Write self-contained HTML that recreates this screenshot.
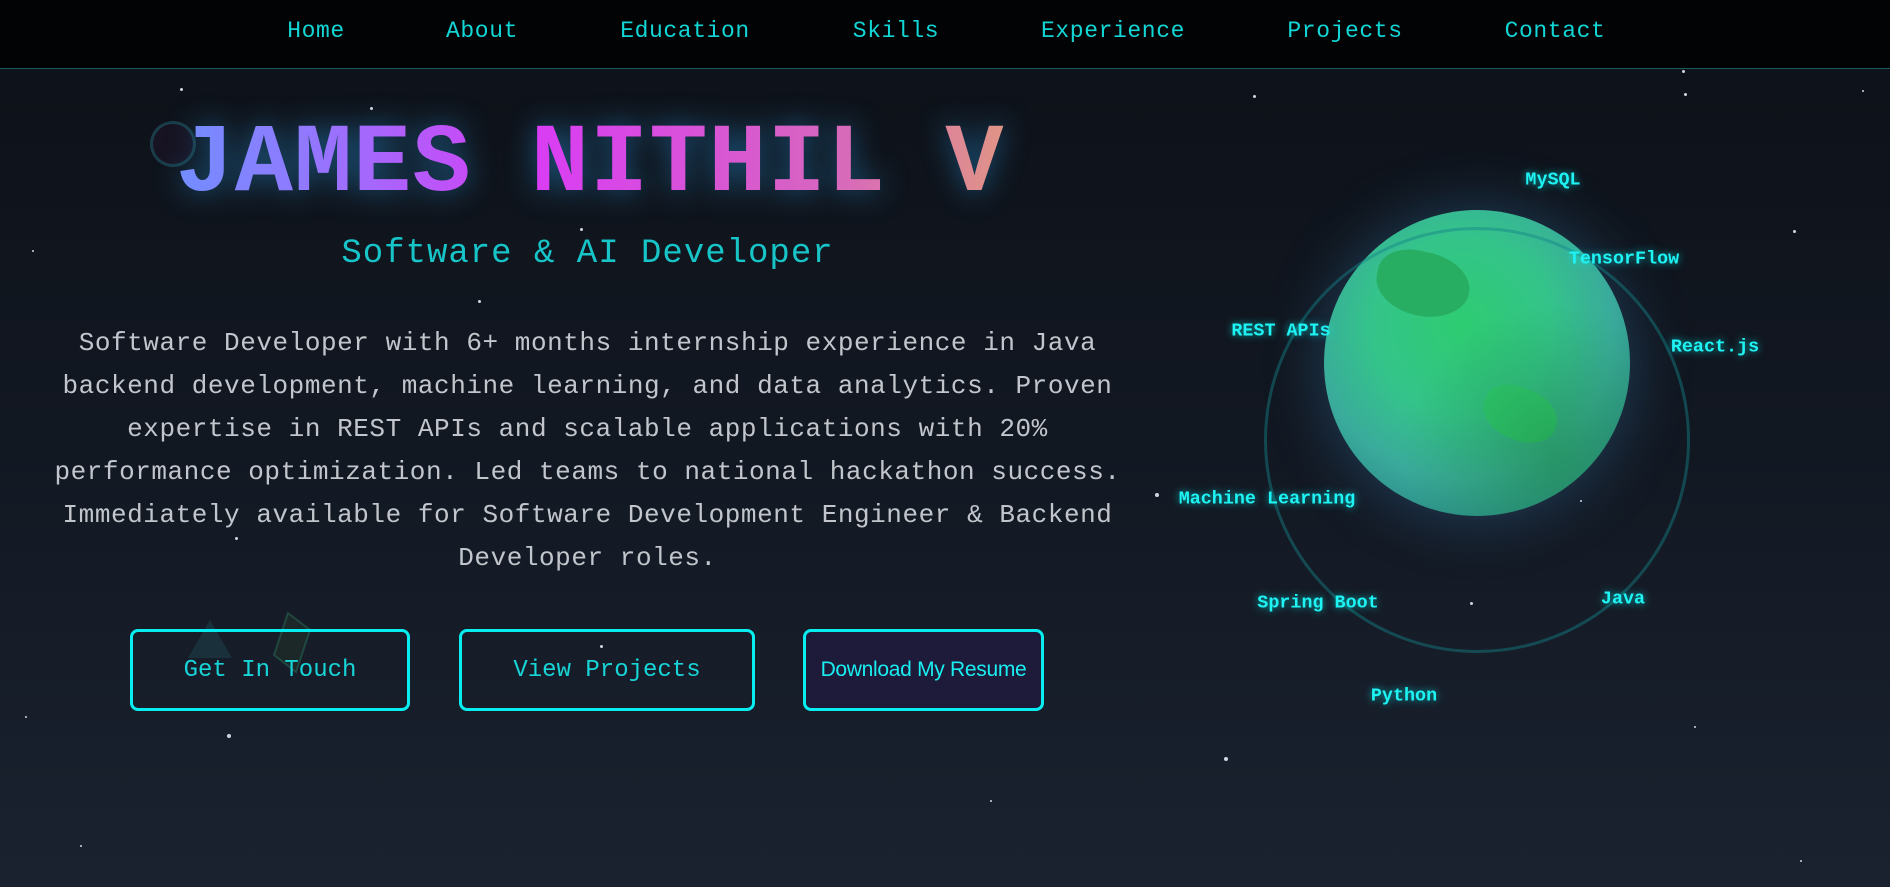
<!DOCTYPE html>
<html><head><meta charset="utf-8"><style>
*{margin:0;padding:0;box-sizing:border-box}
body{width:1890px;height:887px;overflow:hidden;background:linear-gradient(180deg,#0d1118 0%,#121822 50%,#1a2230 100%);font-family:"Liberation Mono",monospace;position:relative}
nav{position:absolute;left:0;top:0;width:1890px;height:69px;background:#020304;border-bottom:1px solid #1d5a5a}
nav span{position:absolute;top:18px;color:#12d6d6;font-size:23px;transform:translateX(-50%);letter-spacing:0.6px}
.star{position:absolute;background:#cfd6e0;border-radius:50%}
h1{position:absolute;left:0;width:1180px;top:110px;text-align:center;font-size:97px;font-weight:bold;letter-spacing:1px;white-space:nowrap;
background:linear-gradient(90deg,#4aa8ff 0%,#8e7bff 25%,#d93cf5 45%,#d765c0 70%,#e6b460 95%);-webkit-background-clip:text;background-clip:text;color:transparent;filter:drop-shadow(0 0 14px rgba(40,150,220,.55))}
.sub{position:absolute;left:0;width:1175px;top:235px;text-align:center;color:#17c4c8;font-size:34px;letter-spacing:1px}
.p{position:absolute;left:0;width:1175px;top:322px;text-align:center;color:#c2c6cc;font-size:26px;line-height:43px;letter-spacing:.55px;white-space:nowrap}
.btn{position:absolute;top:629px;height:82px;border:3px solid #08eef0;border-radius:8px;color:#17d4d6;font-size:24px;display:flex;align-items:center;justify-content:center}
.planet{position:absolute;left:1324px;top:210px;width:306px;height:306px;border-radius:50%;
background:radial-gradient(circle at 45% 38%,#2ecc71 0%,#34c48a 35%,#3aaa9c 60%,#2b8a88 80%,#2a7e8a 100%);box-shadow:0 0 60px rgba(60,140,200,.35)}
.planet:after{content:"";position:absolute;inset:0;border-radius:50%;background:radial-gradient(circle at 75% 80%,rgba(30,140,70,.6),rgba(30,140,70,0) 45%)}
.orbit{position:absolute;left:1264px;top:227px;width:426px;height:426px;border-radius:50%;border:3px solid rgba(20,130,135,.45)}
.lab{position:absolute;color:#1ef4f4;font-weight:bold;font-size:18.4px;transform:translate(-50%,-50%);text-shadow:0 0 8px rgba(0,240,240,.7);white-space:nowrap}
</style></head><body>
<nav>
<span style="left:316px">Home</span><span style="left:482px">About</span><span style="left:685px">Education</span><span style="left:896px">Skills</span><span style="left:1113px">Experience</span><span style="left:1345px">Projects</span><span style="left:1555px">Contact</span>
</nav>
<div style="position:absolute;left:150px;top:121px;width:46px;height:46px;border-radius:50%;border:3px solid rgba(30,90,100,.6);background:rgba(40,20,50,.35)"></div>
<svg style="position:absolute;left:180px;top:610px" width="160" height="70"><polygon points="30,10 52,48 8,48" fill="rgba(30,70,80,.5)"/><polygon points="108,3 130,20 116,62 94,45" fill="rgba(40,60,40,.35)" stroke="rgba(40,110,90,.5)" stroke-width="2"/></svg>
<h1>JAMES NITHIL V</h1>
<div class="sub">Software &amp; AI Developer</div>
<div class="p">Software Developer with 6+ months internship experience in Java<br>backend development, machine learning, and data analytics. Proven<br>expertise in REST APIs and scalable applications with 20%<br>performance optimization. Led teams to national hackathon success.<br>Immediately available for Software Development Engineer &amp; Backend<br>Developer roles.</div>
<div class="btn" style="left:130px;width:280px">Get In Touch</div>
<div class="btn" style="left:459px;width:296px">View Projects</div>
<div class="btn" style="left:803px;width:241px;background:#1d1a3a;color:#19eef0;font-family:'Liberation Sans',sans-serif;font-size:21px;letter-spacing:-.3px">Download My Resume</div>
<div class="planet">
<div style="position:absolute;left:52px;top:42px;width:94px;height:64px;border-radius:40% 50% 50% 50%;background:#28ae62;transform:rotate(12deg)"></div>
<div style="position:absolute;left:158px;top:178px;width:76px;height:52px;border-radius:40% 50% 45% 50%;background:#2fcc70;transform:rotate(20deg)"></div>
</div>
<div class="orbit"></div>
<div class="lab" style="left:1553px;top:180px">MySQL</div>
<div class="lab" style="left:1624px;top:259px">TensorFlow</div>
<div class="lab" style="left:1715px;top:347px">React.js</div>
<div class="lab" style="left:1281px;top:331px">REST APIs</div>
<div class="lab" style="left:1267px;top:499px">Machine Learning</div>
<div class="lab" style="left:1318px;top:603px">Spring Boot</div>
<div class="lab" style="left:1623px;top:599px">Java</div>
<div class="lab" style="left:1404px;top:696px">Python</div>
<div class="star" style="left:180px;top:88px;width:3px;height:3px"></div>
<div class="star" style="left:370px;top:107px;width:3px;height:3px"></div>
<div class="star" style="left:478px;top:300px;width:3px;height:3px"></div>
<div class="star" style="left:580px;top:228px;width:3px;height:3px"></div>
<div class="star" style="left:32px;top:250px;width:2px;height:2px"></div>
<div class="star" style="left:1253px;top:95px;width:3px;height:3px"></div>
<div class="star" style="left:1684px;top:93px;width:3px;height:3px"></div>
<div class="star" style="left:1682px;top:70px;width:3px;height:3px"></div>
<div class="star" style="left:1793px;top:230px;width:3px;height:3px"></div>
<div class="star" style="left:1155px;top:493px;width:4px;height:4px"></div>
<div class="star" style="left:1470px;top:602px;width:3px;height:3px"></div>
<div class="star" style="left:1224px;top:757px;width:4px;height:4px"></div>
<div class="star" style="left:227px;top:734px;width:4px;height:4px"></div>
<div class="star" style="left:235px;top:537px;width:3px;height:3px"></div>
<div class="star" style="left:600px;top:645px;width:3px;height:3px"></div>
<div class="star" style="left:1694px;top:726px;width:2px;height:2px"></div>
<div class="star" style="left:1862px;top:90px;width:2px;height:2px"></div>
<div class="star" style="left:1800px;top:860px;width:2px;height:2px"></div>
<div class="star" style="left:80px;top:845px;width:2px;height:2px"></div>
<div class="star" style="left:990px;top:800px;width:2px;height:2px"></div>
<div class="star" style="left:1580px;top:500px;width:2px;height:2px"></div>
<div class="star" style="left:25px;top:716px;width:2px;height:2px"></div>
</body></html>
